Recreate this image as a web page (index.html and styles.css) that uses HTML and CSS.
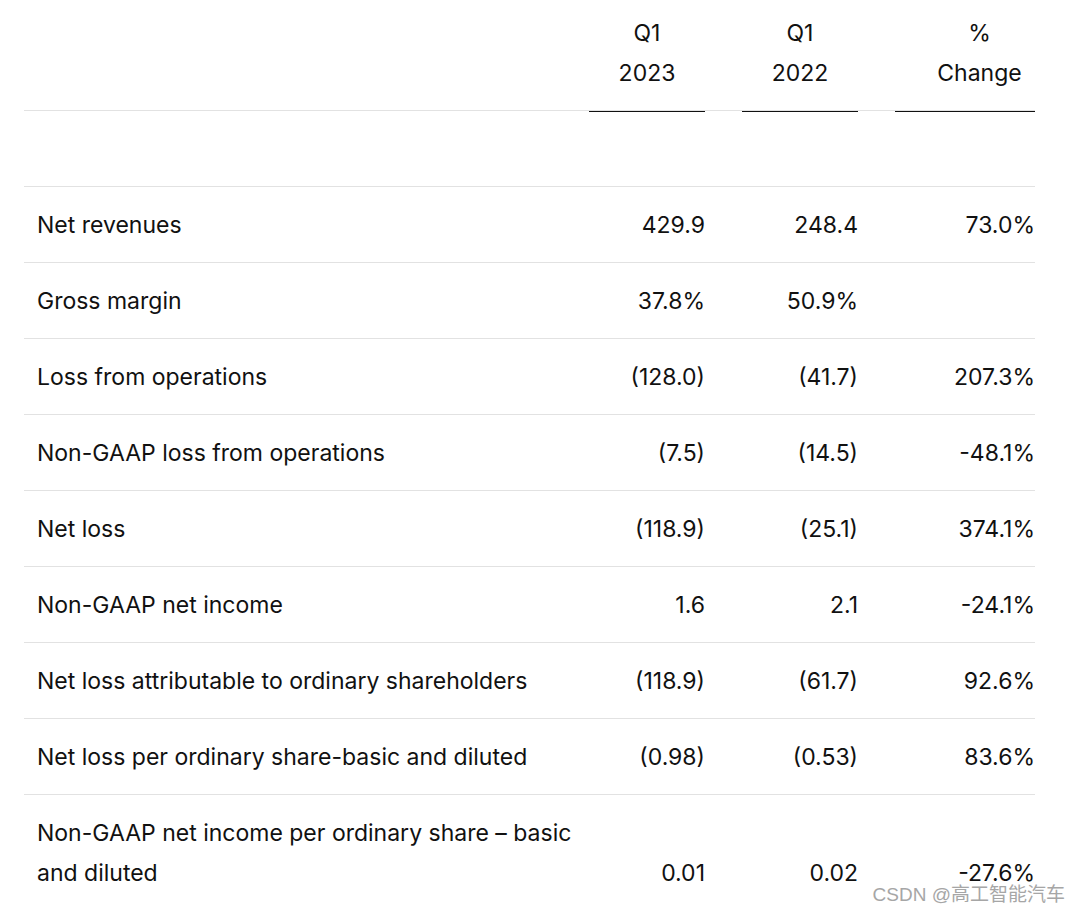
FILE: index.html
```html
<!DOCTYPE html>
<html lang="en">
<head>
<meta charset="utf-8">
<title>Q1 2023 Results</title>
<link rel="stylesheet" href="styles.css">
</head>
<body>
<div class="page">
  <table class="fin">
    <colgroup>
      <col class="c-label">
      <col class="c-first">
      <col class="c-num">
      <col class="c-pct">
    </colgroup>
    <thead>
      <tr class="head">
        <th class="blank"></th>
        <th class="first"><div class="hd">Q1<br>2023</div></th>
        <th><div class="hd">Q1<br>2022</div></th>
        <th><div class="hd hd-pct">%<br>Change</div></th>
      </tr>
    </thead>
    <tbody>
      <tr class="spacer"><td></td><td></td><td></td><td></td></tr>
      <tr><td class="lbl">Net revenues</td><td class="num">429.9</td><td class="num">248.4</td><td class="num">73.0%</td></tr>
      <tr><td class="lbl">Gross margin</td><td class="num">37.8%</td><td class="num">50.9%</td><td class="num"></td></tr>
      <tr><td class="lbl">Loss from operations</td><td class="num">(128.0)</td><td class="num">(41.7)</td><td class="num">207.3%</td></tr>
      <tr><td class="lbl">Non-GAAP loss from operations</td><td class="num">(7.5)</td><td class="num">(14.5)</td><td class="num">-48.1%</td></tr>
      <tr><td class="lbl">Net loss</td><td class="num">(118.9)</td><td class="num">(25.1)</td><td class="num">374.1%</td></tr>
      <tr><td class="lbl">Non-GAAP net income</td><td class="num">1.6</td><td class="num">2.1</td><td class="num">-24.1%</td></tr>
      <tr><td class="lbl">Net loss attributable to ordinary shareholders</td><td class="num">(118.9)</td><td class="num">(61.7)</td><td class="num">92.6%</td></tr>
      <tr><td class="lbl">Net loss per ordinary share-basic and diluted</td><td class="num">(0.98)</td><td class="num">(0.53)</td><td class="num">83.6%</td></tr>
      <tr class="last"><td class="lbl">Non-GAAP net income per ordinary share – basic and diluted</td><td class="num">0.01</td><td class="num">0.02</td><td class="num">-27.6%</td></tr>
    </tbody>
  </table>
  <div class="watermark">CSDN @高工智能汽车</div>
</div>
</body>
</html>
```

FILE: styles.css
```css
html, body {
  margin: 0;
  padding: 0;
  background: #ffffff;
}

.page {
  position: relative;
  width: 1080px;
  height: 914px;
  overflow: hidden;
  padding: 0 0 0 24px;
  box-sizing: border-box;
  font-family: Inter, "Liberation Sans", "Noto Sans CJK SC", sans-serif;
  color: #111111;
}

.fin {
  width: 1011px;
  border-collapse: collapse;
  table-layout: fixed;
  font-size: 23px;
  line-height: 40px;
}

.c-label { width: 565px; }
.c-first { width: 116px; }
.c-num { width: 153px; }
.c-pct { width: 177px; }

.head th {
  padding: 13px 0 0 37px;
  font-weight: 400;
  text-align: center;
  border-bottom: 1px solid #e2e2e2;
  vertical-align: bottom;
}

.head th.blank {
  padding: 0;
}

.head th.first {
  padding-left: 0;
}

.hd {
  padding-bottom: 17px;
  border-bottom: 2px solid #111111;
  margin-bottom: -2px;
}

.hd-pct {
  padding-left: 29px;
}

.spacer td {
  height: 75px;
  padding: 0;
  border-bottom: 1px solid #e2e2e2;
}

tbody tr td {
  padding: 18px 0 17px 0;
  border-bottom: 1px solid #e2e2e2;
}

tbody tr.last td {
  border-bottom: none;
}

td.lbl {
  padding-left: 13px;
  padding-right: 6px;
  text-align: left;
}

td.num {
  text-align: right;
  vertical-align: bottom;
}

.watermark {
  position: absolute;
  right: 15px;
  top: 881px;
  font-family: "Liberation Sans", "Noto Sans CJK SC", sans-serif;
  font-size: 19px;
  line-height: 28px;
  color: #a6a6a6;
}
```
